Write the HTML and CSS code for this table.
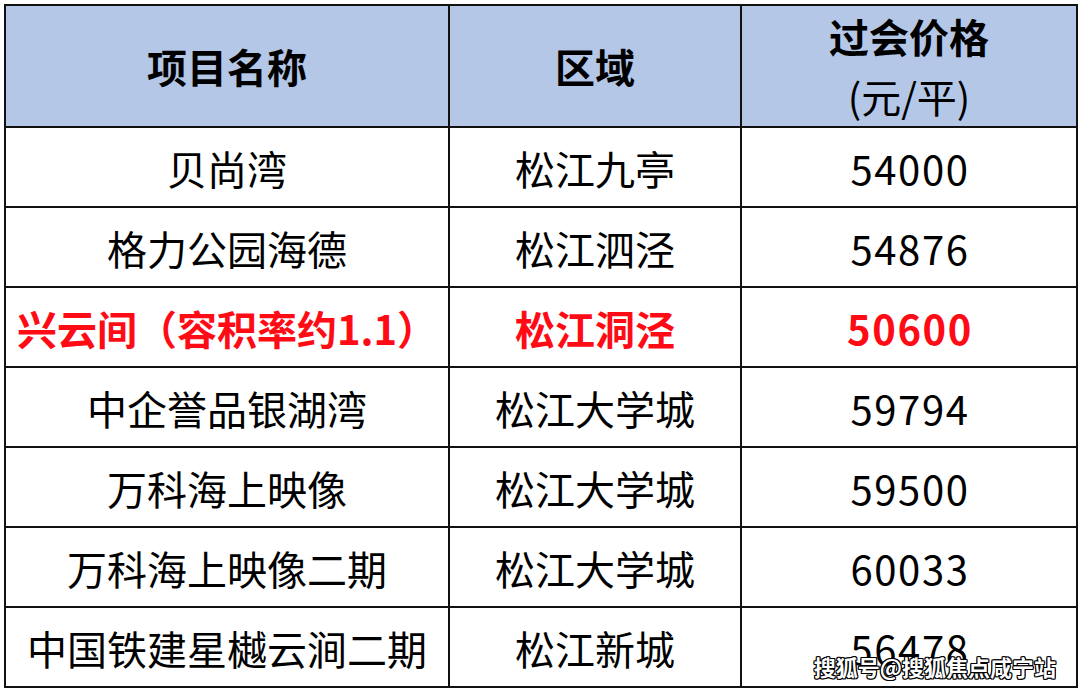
FILE: index.html
```html
<!DOCTYPE html>
<html lang="zh">
<head>
<meta charset="utf-8">
<link rel="stylesheet" href="styles.css">
</head>
<body>
<div class="wrap">
<table class="grid">
  <colgroup><col class="c1"><col class="c2"><col class="c3"></colgroup>
  <thead>
    <tr><th>项目名称</th><th>区域</th><th class="price-h">过会价格<br><span class="unit">(元/平)</span></th></tr>
  </thead>
  <tbody>
    <tr><td>贝尚湾</td><td>松江九亭</td><td class="num">54000</td></tr>
    <tr><td>格力公园海德</td><td>松江泗泾</td><td class="num">54876</td></tr>
    <tr class="hl"><td>兴云间（容积率约1.1）</td><td>松江洞泾</td><td class="num">50600</td></tr>
    <tr><td>中企誉品银湖湾</td><td>松江大学城</td><td class="num">59794</td></tr>
    <tr><td>万科海上映像</td><td>松江大学城</td><td class="num">59500</td></tr>
    <tr><td>万科海上映像二期</td><td>松江大学城</td><td class="num">60033</td></tr>
    <tr><td>中国铁建星樾云涧二期</td><td>松江新城</td><td class="num">56478</td></tr>
  </tbody>
</table>
<div class="mark">搜狐号@搜狐焦点咸宁站</div>
</div>
</body>
</html>
```
FILE: styles.css
```css
html, body { margin: 0; padding: 0; background: #fff; }
body { font-family: "Noto Sans CJK SC", "Noto Sans", sans-serif; color: #000; }
.wrap { position: relative; width: 1080px; height: 692px; padding: 4px 0 0 4px; box-sizing: border-box; }
.grid { border-collapse: collapse; width: 1072px; table-layout: fixed; }
.c1 { width: 444px; }
.c2 { width: 292px; }
.c3 { width: 336px; }
.grid th, .grid td { border: 2px solid #111; text-align: center; padding: 0; font-size: 40px; line-height: 40px; }
.grid th { background: #b4c7e7; height: 120px; font-weight: 700; }
.grid td { height: 76px; font-weight: 400; padding-top: 2px; }
.grid td.num { letter-spacing: 1.6px; padding-left: 2px; }
.price-h { line-height: 60px !important; }
.unit { font-weight: 400; }
.hl td { color: #fe0b16; font-weight: 700; }
.mark { position: absolute; right: 24px; bottom: 10px; font-size: 22px; color: #fff; font-weight: 700; letter-spacing: 0;
  text-shadow: -1px -1px 0 #000, 1px -1px 0 #000, -1px 1px 0 #000, 1px 1px 0 #000, 0 1px 0 #000, 1px 0 0 #000, -1px 0 0 #000, 0 -1px 0 #000; }
```
